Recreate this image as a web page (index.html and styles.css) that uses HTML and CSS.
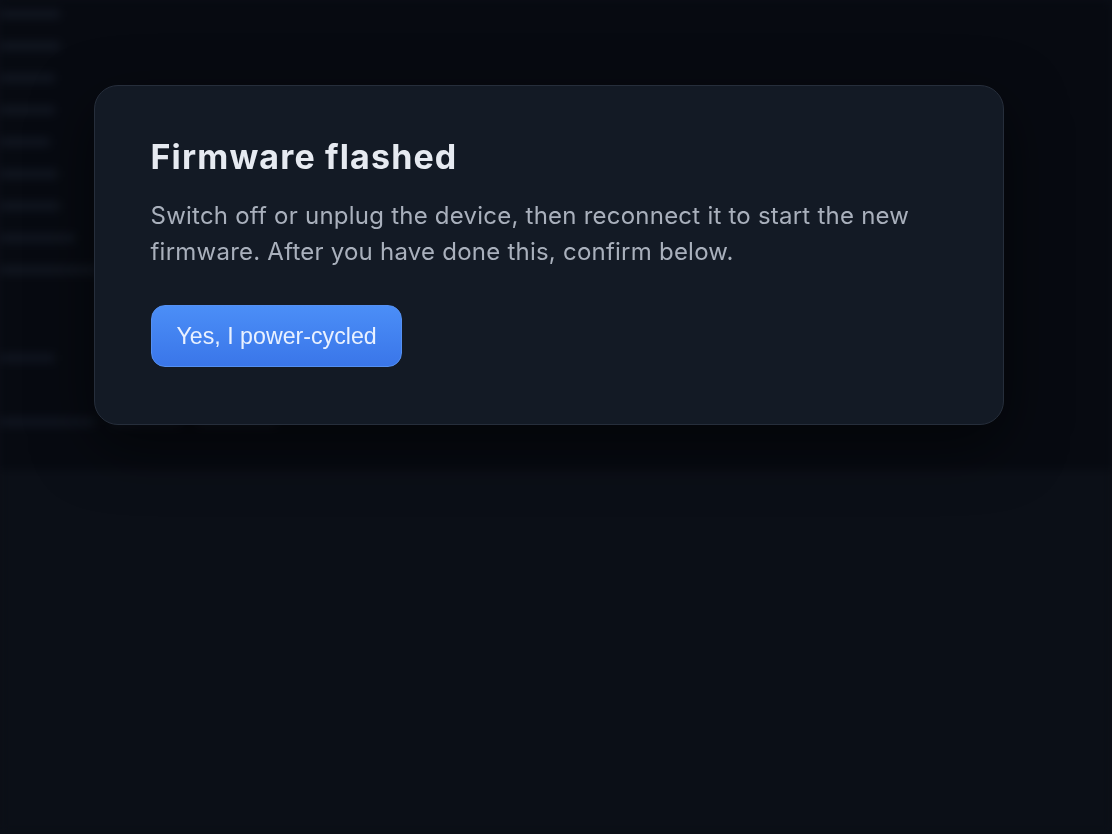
FILE: index.html
```html
<!DOCTYPE html>
<html lang="en">
<head>
<meta charset="utf-8">
<title>Firmware flashed</title>
<link rel="stylesheet" href="styles.css">
</head>
<body>
<div class="app" aria-hidden="true">
  <div class="app-top">
    <ul class="log">
      <li class="w60"></li><li class="w60"></li><li class="w55"></li><li class="w55"></li>
      <li class="w50"></li><li class="w58"></li><li class="w60"></li><li class="w75"></li><li class="w100"></li>
    </ul>
    <div class="row-a"></div>
    <div class="row-b"><span class="s1"></span><span class="s2"></span><span class="s3"></span></div>
  </div>
  <div class="app-bottom"></div>
</div>
<div class="overlay">
  <div class="dialog" role="dialog" aria-labelledby="dlg-title">
    <h1 id="dlg-title" class="dialog-title">Firmware flashed</h1>
    <p class="dialog-text">Switch off or unplug the device, then reconnect it to start the new firmware. After you have done this, confirm below.</p>
    <button class="btn-primary" type="button">Yes, I power-cycled</button>
  </div>
</div>
</body>
</html>
```

FILE: styles.css
```css
* { box-sizing: border-box; }
html, body { margin: 0; height: 100%; }
body {
  background: #0b0f17;
  font-family: Inter, "Noto Sans", sans-serif;
  overflow: hidden;
}
.app {
  height: 100%;
  display: flex;
  flex-direction: column;
  filter: blur(5px);
}
.app-top {
  height: 470px;
  background: #070a11;
  padding: 10px 0 0 0;
}
.app-bottom {
  flex: 1;
  background: #0b0f17;
}
.log {
  list-style: none;
  margin: 0;
  padding: 0;
  display: flex;
  flex-direction: column;
  gap: 24px;
}
.log li {
  height: 8px;
  background: #121722;
  border-radius: 2px;
}
.w50 { width: 50px; } .w55 { width: 55px; } .w58 { width: 58px; } .w60 { width: 60px; }
.w75 { width: 75px; } .w100 { width: 100px; }
.row-a { margin-top: 80px; width: 55px; height: 8px; background: #111621; }
.row-b { margin-top: 56px; display: flex; gap: 16px; }
.row-b span { height: 8px; background: #111621; }
.s1 { width: 95px; } .s2 { width: 70px; } .s3 { width: 80px; }

.overlay {
  position: fixed;
  inset: 0;
  display: flex;
  justify-content: center;
  align-items: flex-start;
  padding: 85px 15px 0 0;
}
.dialog {
  width: 910px;
  background: #131a25;
  border: 1px solid #262e3b;
  border-radius: 24px;
  padding: 50px 56px 57px;
  box-shadow: 0 20px 60px rgba(0, 0, 0, 0.55);
}
.dialog-title {
  margin: 0 0 20px;
  font-size: 34px;
  font-weight: 700;
  line-height: 42px;
  color: #e6eaf1;
  letter-spacing: 1.15px;
}
.dialog-text {
  margin: 0 0 35px;
  font-size: 24px;
  line-height: 36px;
  letter-spacing: 0.23px;
  color: #a9b0bc;
}
.btn-primary {
  height: 62px;
  padding: 0 24px 0 25px;
  border: 1px solid #5590f2;
  border-radius: 14px;
  background: linear-gradient(#4b8ef7, #3a76e9);
  color: #e9f1ff;
  font-family: "Liberation Sans", Arial, sans-serif;
  font-size: 23.2px;
  cursor: pointer;
}
```
